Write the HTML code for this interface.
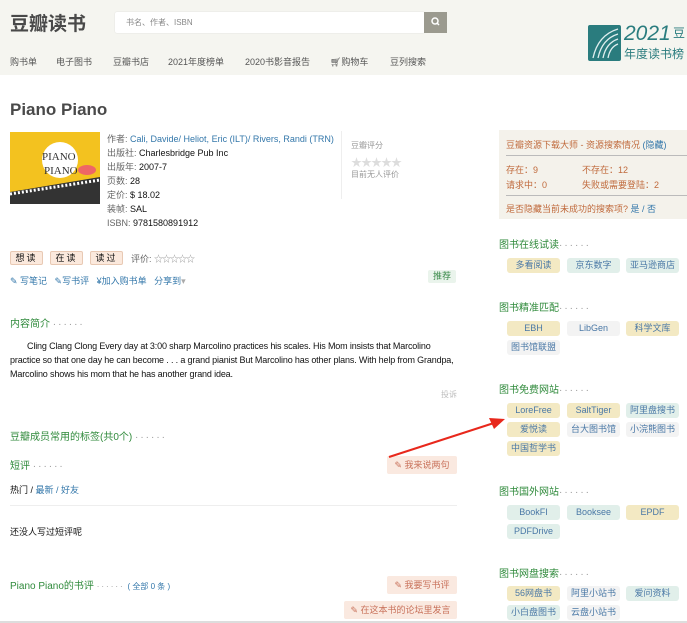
<!DOCTYPE html>
<html><head><meta charset="utf-8"><style>
*{margin:0;padding:0;box-sizing:border-box}
body{width:687px;height:623px;overflow:hidden;background:#fff;font-family:"Liberation Sans","Noto Sans CJK SC",sans-serif;color:#111;position:relative;font-size:9px}
.a{position:absolute;white-space:nowrap}
.hd{position:absolute;left:0;top:0;width:687px;height:75px;background:#f5f5f0}
.g{color:#2f8a3b}
.b{color:#37a}
.tag{position:absolute;height:15px;width:53px;border-radius:3px;text-align:center;line-height:15px;font-size:9px;color:#4a78a6}
.y{background:#f3e9c3}.t{background:#e1efea}.gr{background:#f3f3f3}
.dots{color:#999;letter-spacing:2px}
.btn{position:absolute;background:#fae9e0;color:#c8715a;border-radius:2px;text-align:center;font-size:9px}
.sb{position:absolute;height:14px;background:#fbe9dd;border:1px solid #e8c9b4;border-radius:2px;font-size:9px;text-align:center;line-height:12px;width:33px;letter-spacing:2px}
</style></head><body>
<div class="hd"></div>
<div class="a" style="left:10px;top:9px;font-size:19px;font-weight:bold;color:#494949">豆瓣读书</div>
<div class="a" style="left:115px;top:12px;width:310px;height:21px;background:#fff;border-radius:2px;box-shadow:0 0 1px #ccc"></div>
<div class="a" style="left:126px;top:17px;color:#888;font-size:8px">书名、作者、ISBN</div>
<div class="a" style="left:424px;top:12px;width:23px;height:21px;background:#9b9a8f"><svg width="23" height="21"><circle cx="11" cy="9" r="3" fill="none" stroke="#fff" stroke-width="1.5"/><line x1="13" y1="11" x2="15" y2="13" stroke="#fff" stroke-width="1.5"/></svg></div>
<div class="a" style="left:10px;top:55px;color:#555">购书单</div>
<div class="a" style="left:56px;top:55px;color:#555">电子图书</div>
<div class="a" style="left:113px;top:55px;color:#555">豆瓣书店</div>
<div class="a" style="left:168px;top:55px;color:#555">2021年度榜单</div>
<div class="a" style="left:245px;top:55px;color:#555">2020书影音报告</div>
<div class="a" style="left:330px;top:55px;color:#555">🛒︎购物车</div>
<div class="a" style="left:390px;top:55px;color:#555">豆列搜索</div>
<div class="a" style="left:588px;top:25px;width:33px;height:36px;border:2px solid #2a7c7e;background:#2a7c7e;border-radius:2px"><svg width="29" height="32"><path d="M3 31 Q8 8 28 2 M8 31 Q12 12 28 7 M13 31 Q16 16 28 12 M18 31 Q20 20 28 17" stroke="#dfeeee" fill="none" stroke-width="1.3"/></svg></div>
<div class="a" style="left:624px;top:22px;font-size:21px;font-style:italic;color:#2a7c7e">2021</div>
<div class="a" style="left:673px;top:24px;font-size:12px;color:#2a7c7e">豆</div>
<div class="a" style="left:624px;top:45px;font-size:12px;color:#2a7c7e">年度读书榜</div>

<div class="a" style="left:10px;top:100px;font-size:17px;font-weight:bold;color:#494949">Piano Piano</div>
<div class="a" style="left:10px;top:132px;width:90px;height:72px;background:#f3c21f"><svg width="90" height="72"><circle cx="50" cy="28" r="18" fill="#fff"/><text x="32" y="28" font-size="11" fill="#333" font-family="Liberation Serif">PIANO</text><text x="34" y="42" font-size="11" fill="#333" font-family="Liberation Serif">PIANO</text><path d="M0 60 L90 45 L90 72 L0 72Z" fill="#333"/><path d="M0 62 L90 48" stroke="#fff" stroke-width="3" stroke-dasharray="2 2"/><ellipse cx="77" cy="38" rx="9" ry="5" fill="#e66"/></svg></div>
<div class="a" style="left:107px;top:132px;line-height:14px;color:#111">
<span style="color:#666">作者:</span> <span class="b">Cali, Davide/ Heliot, Eric (ILT)/ Rivers, Randi (TRN)</span><br>
<span style="color:#666">出版社:</span> Charlesbridge Pub Inc<br>
<span style="color:#666">出版年:</span> 2007-7<br>
<span style="color:#666">页数:</span> 28<br>
<span style="color:#666">定价:</span> $ 18.02<br>
<span style="color:#666">装帧:</span> SAL<br>
<span style="color:#666">ISBN:</span> 9781580891912</div>
<div class="a" style="left:341px;top:131px;width:1px;height:68px;background:#eee"></div>
<div class="a" style="left:351px;top:140px;color:#999;font-size:8px">豆瓣评分</div>
<div class="a" style="left:351px;top:154px;color:#ddd;font-size:11px;letter-spacing:-1px">★★★★★</div>
<div class="a" style="left:351px;top:169px;color:#999;font-size:8px">目前无人评价</div>

<div class="sb" style="left:10px;top:251px">想读</div>
<div class="sb" style="left:50px;top:251px">在读</div>
<div class="sb" style="left:90px;top:251px">读过</div>
<div class="a" style="left:131px;top:252px;color:#666">评价: <span style="color:#999;letter-spacing:-1px">☆☆☆☆☆</span></div>
<div class="a b" style="left:10px;top:274px">✎ 写笔记 &nbsp; ✎写书评 &nbsp; ¥加入购书单 &nbsp; 分享到<span style="color:#aaa">▾</span></div>
<div class="a" style="left:428px;top:270px;width:28px;height:13px;background:#eaf4ec;color:#3a8a4a;text-align:center;line-height:13px;border-radius:2px">推荐</div>

<div class="a g" style="left:10px;top:315px;font-size:10px">内容简介 <span class="dots">······</span></div>
<div class="a" style="left:10px;top:339px;width:452px;white-space:normal;line-height:14px;color:#111;text-indent:17px;letter-spacing:-0.15px">Cling Clang Clong Every day at 3:00 sharp Marcolino practices his scales. His Mom insists that Marcolino practice so that one day he can become . . . a grand pianist But Marcolino has other plans. With help from Grandpa, Marcolino shows his mom that he has another grand idea.</div>
<div class="a" style="left:441px;top:389px;color:#bbb;font-size:8px">投诉</div>
<div class="a g" style="left:10px;top:428px;font-size:10px">豆瓣成员常用的标签(共0个) <span class="dots">······</span></div>
<div class="a g" style="left:10px;top:457px;font-size:10px">短评 <span class="dots">······</span></div>
<div class="btn" style="left:387px;top:456px;width:70px;height:18px;line-height:18px">✎ 我来说两句</div>
<div class="a" style="left:10px;top:483px">热门 / <span class="b">最新 / 好友</span></div>
<div class="a" style="left:10px;top:505px;width:447px;height:1px;background:#eee"></div>
<div class="a" style="left:10px;top:525px">还没人写过短评呢</div>
<div class="a g" style="left:10px;top:577px;font-size:10px">Piano Piano的书评 <span class="dots" style="font-size:8px">······</span> <span class="b" style="font-size:8px">( 全部 0 条 )</span></div>
<div class="btn" style="left:387px;top:576px;width:70px;height:18px;line-height:18px">✎ 我要写书评</div>
<div class="btn" style="left:344px;top:601px;width:113px;height:18px;line-height:18px">✎ 在这本书的论坛里发言</div>
<svg class="a" style="left:385px;top:412px" width="125" height="50"><line x1="4" y1="45" x2="112" y2="10" stroke="#e8281c" stroke-width="2"/><path d="M120 7 L104 6 L109 17Z" fill="#e8281c"/></svg>

<div class="a" style="left:499px;top:130px;width:188px;height:89px;background:#f4f2eb"></div>
<div class="a" style="left:506px;top:138px;color:#c06a3c;font-size:9px">豆瓣资源下载大师 - 资源搜索情况 <span class="b">(隐藏)</span></div>
<div class="a" style="left:506px;top:155px;width:181px;height:1px;background:#bbb"></div>
<div class="a" style="left:506px;top:163px;color:#c06a3c">存在：9</div>
<div class="a" style="left:582px;top:163px;color:#c06a3c">不存在：12</div>
<div class="a" style="left:506px;top:178px;color:#c06a3c">请求中：0</div>
<div class="a" style="left:582px;top:178px;color:#c06a3c">失败或需要登陆：2</div>
<div class="a" style="left:506px;top:195px;width:181px;height:1px;background:#bbb"></div>
<div class="a" style="left:506px;top:202px;color:#c06a3c">是否隐藏当前未成功的搜索项? <span class="b">是 / 否</span></div>

<div class="a g" style="left:499px;top:236px;font-size:10px">图书在线试读<span class="dots">······</span></div>
<div class="tag y" style="left:507px;top:258px">多看阅读</div><div class="tag t" style="left:567px;top:258px">京东数字</div><div class="tag t" style="left:626px;top:258px">亚马逊商店</div>
<div class="a g" style="left:499px;top:299px;font-size:10px">图书精准匹配<span class="dots">······</span></div>
<div class="tag y" style="left:507px;top:321px">EBH</div><div class="tag gr" style="left:567px;top:321px">LibGen</div><div class="tag y" style="left:626px;top:321px">科学文库</div>
<div class="tag gr" style="left:507px;top:340px">图书馆联盟</div>
<div class="a g" style="left:499px;top:381px;font-size:10px">图书免费网站<span class="dots">······</span></div>
<div class="tag y" style="left:507px;top:403px">LoreFree</div><div class="tag y" style="left:567px;top:403px">SaltTiger</div><div class="tag t" style="left:626px;top:403px">阿里盘搜书</div>
<div class="tag y" style="left:507px;top:422px">爱悦读</div><div class="tag gr" style="left:567px;top:422px">台大图书馆</div><div class="tag gr" style="left:626px;top:422px">小浣熊图书</div>
<div class="tag y" style="left:507px;top:441px">中国哲学书</div>
<div class="a g" style="left:499px;top:483px;font-size:10px">图书国外网站<span class="dots">······</span></div>
<div class="tag t" style="left:507px;top:505px">BookFI</div><div class="tag t" style="left:567px;top:505px">Booksee</div><div class="tag y" style="left:626px;top:505px">EPDF</div>
<div class="tag t" style="left:507px;top:524px">PDFDrive</div>
<div class="a g" style="left:499px;top:565px;font-size:10px">图书网盘搜索<span class="dots">······</span></div>
<div class="tag y" style="left:507px;top:586px">56网盘书</div><div class="tag gr" style="left:567px;top:586px">阿里小站书</div><div class="tag t" style="left:626px;top:586px">爱问资料</div>
<div class="tag t" style="left:507px;top:605px">小白盘图书</div><div class="tag gr" style="left:567px;top:605px">云盘小站书</div>
<div class="a" style="left:0;top:621px;width:687px;height:2px;background:#ddd"></div>
</body></html>
